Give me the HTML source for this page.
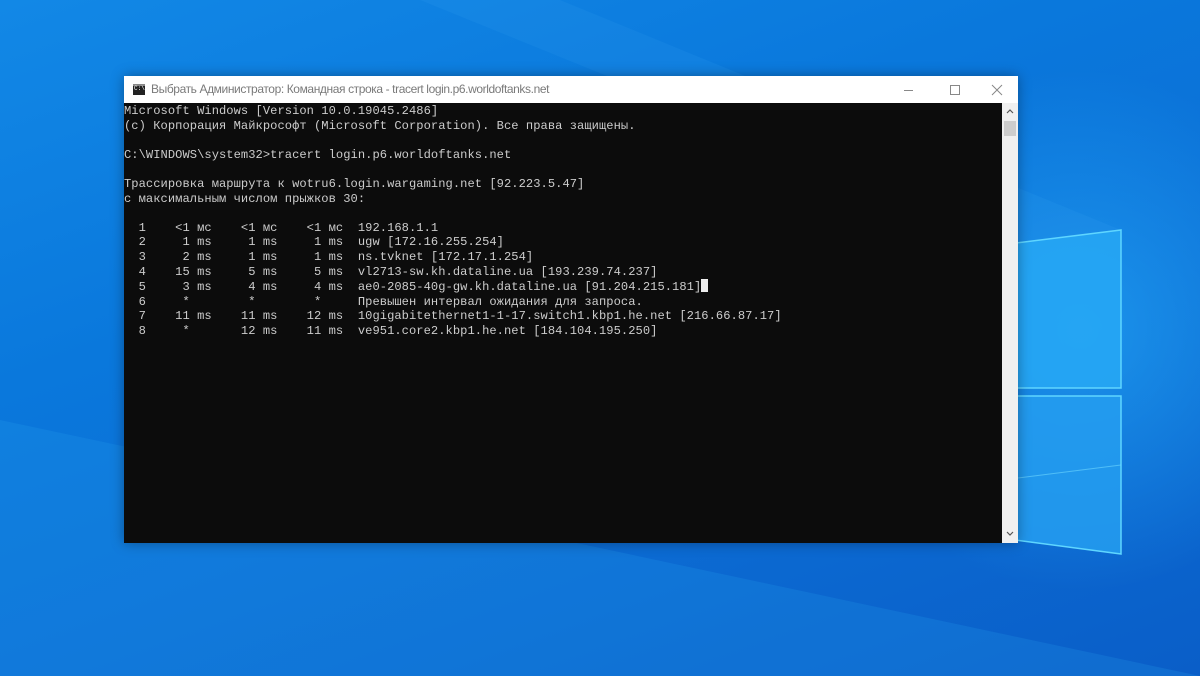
<!DOCTYPE html>
<html><head><meta charset="utf-8"><style>
html,body{margin:0;padding:0;width:1200px;height:676px;overflow:hidden}
body{position:relative;background:
radial-gradient(ellipse 260px 260px at 1080px 330px, rgba(40,180,255,0.55), rgba(40,180,255,0) 100%),
linear-gradient(160deg,#1288e6 0%,#0a78dc 35%,#0c6fd6 60%,#0a5ec8 100%);}
.bg{position:absolute;left:0;top:0}
.win{position:absolute;left:124px;top:76px;width:894px;height:467px;background:#fff;box-shadow:0 0 12px rgba(0,0,0,.35)}
.title{position:absolute;left:0;top:0;width:894px;height:27px;background:#fff;font:12px "Liberation Sans","Noto Sans CJK SC",sans-serif;color:#7a7a7a}
.title .t{position:absolute;left:27px;top:6px;letter-spacing:-0.4px}
.ico{position:absolute;left:9px;top:8px;width:12px;height:9px;background:#222;border-top:2px solid #888}
.ico:after{content:"C:\\";position:absolute;left:1px;top:-1px;font:6px "Liberation Mono",monospace;color:#fff}
.con{position:absolute;left:0;top:27px;width:878px;height:440px;background:#0c0c0c}
pre{margin:0;position:absolute;left:0;top:1px;font:12.1px/14.6px "Liberation Mono","Noto Sans CJK SC",monospace;color:#cccccc;letter-spacing:0.05px}
.sb{position:absolute;left:878px;top:27px;width:16px;height:440px;background:#f0f0f0}
.thumb{position:absolute;left:2px;top:18px;width:12px;height:15px;background:#cdcdcd}
.cur{display:inline-block;width:7px;height:13px;background:#eee;vertical-align:-2px}
</style></head><body>
<svg class="bg" width="1200" height="676">
<polygon points="0,676 0,420 1200,676" fill="#2aa6f0" opacity=".2"/>
<polygon points="420,0 560,0 1121,230 1018,243" fill="#3fb0f5" opacity=".12"/>
<polygon points="1000,245 1121,230 1121,388 1000,388" fill="#27a8f4" opacity=".85"/>
<polygon points="1000,396 1121,396 1121,554 1000,538" fill="#249df0" opacity=".85"/>
<polyline points="1000,245 1121,230 1121,388 1000,388" fill="none" stroke="#5fd6ff" stroke-width="1.5"/>
<polyline points="1000,396 1121,396 1121,554 1000,538" fill="none" stroke="#5fd6ff" stroke-width="1.5"/>
<line x1="1018" y1="478" x2="1121" y2="465" stroke="#6fd8ff" stroke-width="1" opacity=".6"/>
</svg>
<div class="win">
<div class="title"><div class="ico"></div><span class="t">Выбрать Администратор: Командная строка - tracert  login.p6.worldoftanks.net</span>
<svg style="position:absolute;left:780px;top:8px" width="110" height="12"><line x1="0" y1="6.5" x2="9" y2="6.5" stroke="#888" stroke-width="1"/><rect x="46.5" y="1.5" width="9" height="9" fill="none" stroke="#888"/><path d="M88 1 L98 11 M98 1 L88 11" stroke="#888" stroke-width="1"/></svg>
</div>
<div class="con"><pre>Microsoft Windows [Version 10.0.19045.2486]
(c) Корпорация Майкрософт (Microsoft Corporation). Все права защищены.

C:\WINDOWS\system32&gt;tracert login.p6.worldoftanks.net

Трассировка маршрута к wotru6.login.wargaming.net [92.223.5.47]
с максимальным числом прыжков 30:

  1    &lt;1 мс    &lt;1 мс    &lt;1 мс  192.168.1.1
  2     1 ms     1 ms     1 ms  ugw [172.16.255.254]
  3     2 ms     1 ms     1 ms  ns.tvknet [172.17.1.254]
  4    15 ms     5 ms     5 ms  vl2713-sw.kh.dataline.ua [193.239.74.237]
  5     3 ms     4 ms     4 ms  ae0-2085-40g-gw.kh.dataline.ua [91.204.215.181]<span class="cur"></span>
  6     *        *        *     Превышен интервал ожидания для запроса.
  7    11 ms    11 ms    12 ms  10gigabitethernet1-1-17.switch1.kbp1.he.net [216.66.87.17]
  8     *       12 ms    11 ms  ve951.core2.kbp1.he.net [184.104.195.250]</pre></div>
<div class="sb"><svg style="position:absolute;left:4px;top:5px" width="8" height="6"><path d="M1 5 L4 2 L7 5" fill="none" stroke="#555" stroke-width="1.2"/></svg><div class="thumb"></div><svg style="position:absolute;left:4px;top:428px" width="8" height="6"><path d="M1 1 L4 4 L7 1" fill="none" stroke="#555" stroke-width="1.2"/></svg></div>
</div>
</body></html>
